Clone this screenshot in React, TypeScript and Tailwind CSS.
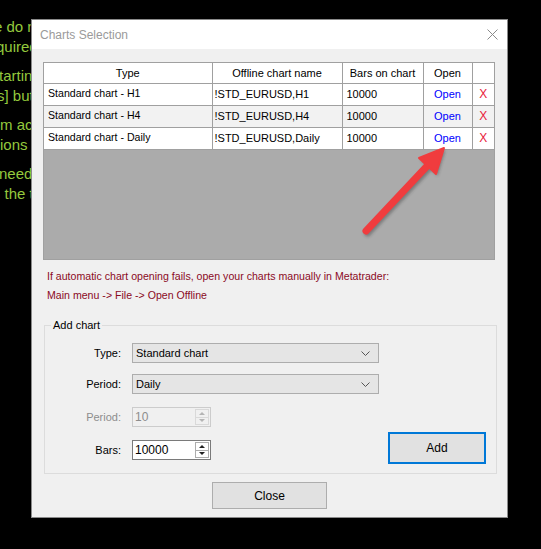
import React from 'react'

const rows = [
  { type: 'Standard chart - H1', name: '!STD_EURUSD,H1', bars: '10000' },
  { type: 'Standard chart - H4', name: '!STD_EURUSD,H4', bars: '10000' },
  { type: 'Standard chart - Daily', name: '!STD_EURUSD,Daily', bars: '10000' },
]

function Chevron() {
  return (
    <svg width="9" height="5" viewBox="0 0 9 5" className="shrink-0">
      <polyline points="0.5,0.5 4.5,4.5 8.5,0.5" fill="none" stroke="#555" strokeWidth="1" />
    </svg>
  )
}

function Select({ value }: { value: string }) {
  return (
    <div className="flex h-[20px] w-[247px] items-center justify-between border border-[#adadad] bg-[#e5e5e5] pl-[3px] pr-[8px]">
      <span>{value}</span>
      <Chevron />
    </div>
  )
}

function Spinner({ value, disabled }: { value: string; disabled?: boolean }) {
  const arrow = disabled ? '#b4b4b4' : '#202020'
  return (
    <div
      className={
        'flex h-[20px] w-[79px] items-center justify-between border pl-[2px] pr-[1px] ' +
        (disabled ? 'border-[#cccccc] bg-[#f0f0f0] text-[#8d8d8d]' : 'border-[#7a7a7a] bg-white text-black')
      }
    >
      <span className="text-[12px]">{value}</span>
      <div className={'flex h-[16px] w-[14px] flex-col border ' + (disabled ? 'border-[#d9d9d9]' : 'border-[#adadad]')}>
        <div className={'flex flex-1 items-center justify-center border-b ' + (disabled ? 'border-[#d9d9d9]' : 'border-[#adadad]')}>
          <svg width="6" height="3" viewBox="0 0 6 3"><polygon points="0,3 3,0 6,3" fill={arrow} /></svg>
        </div>
        <div className="flex flex-1 items-center justify-center">
          <svg width="6" height="3" viewBox="0 0 6 3"><polygon points="0,0 6,0 3,3" fill={arrow} /></svg>
        </div>
      </div>
    </div>
  )
}

function FormRow({ label, disabled, children }: { label: string; disabled?: boolean; children: React.ReactNode }) {
  return (
    <div className="flex items-center">
      <span className={'w-[77px] pr-[1px] text-right ' + (disabled ? 'text-[#8d8d8d]' : 'text-black')}>{label}</span>
      <div className="ml-[10px]">{children}</div>
    </div>
  )
}

export default function App() {
  return (
    <div className="relative h-[549px] w-[541px] overflow-hidden bg-black font-['Liberation_Sans',Arial,sans-serif]">
      {/* terminal text behind the dialog */}
      <div className="pt-[17px] text-[15px] leading-[20px] text-[#94c93d]">
        <div className="ml-[-6px] whitespace-nowrap">e do not</div>
        <div className="ml-[-4px] whitespace-nowrap">quired for</div>
        <div className="ml-[-1px] mt-[9px] whitespace-nowrap">tarting the</div>
        <div className="ml-[-3px] whitespace-nowrap">s] button</div>
        <div className="mt-[9px] whitespace-nowrap">m account</div>
        <div className="whitespace-nowrap">ions for</div>
        <div className="ml-[-1px] mt-[9px] whitespace-nowrap">need to</div>
        <div className="ml-[-8px] whitespace-nowrap">n the terminal</div>
      </div>

      {/* dialog window */}
      <div className="absolute left-[31px] top-[19px] flex h-[499px] w-[477px] flex-col border border-[#8a8a8a] bg-[#f0f0f0] text-[11px] text-black">
        <div className="flex h-[29px] shrink-0 items-center justify-between bg-white pl-[8px] pr-[9px]">
          <span className="text-[12px] text-[#9a9a9a]">Charts Selection</span>
          <svg width="11" height="11" viewBox="0 0 11 11">
            <path d="M0.5 0.5 L10.5 10.5 M10.5 0.5 L0.5 10.5" stroke="#8a8a8a" strokeWidth="1" />
          </svg>
        </div>

        <div className="flex flex-1 flex-col px-[11px] pt-[13px]">
          {/* grid */}
          <div className="relative h-[198px] w-[452px] border border-[#a0a0a0] bg-[#ababab]">
            <table className="w-[450px] table-fixed border-collapse">
              <colgroup>
                <col className="w-[168px]" />
                <col className="w-[130px]" />
                <col className="w-[81px]" />
                <col className="w-[49px]" />
                <col className="w-[22px]" />
              </colgroup>
              <thead>
                <tr className="h-[20px] bg-white">
                  <th className="border-b border-r border-[#a0a0a0] font-normal">Type</th>
                  <th className="border-b border-r border-[#a0a0a0] font-normal">Offline chart name</th>
                  <th className="border-b border-r border-[#a0a0a0] font-normal">Bars on chart</th>
                  <th className="border-b border-r border-[#a0a0a0] font-normal">Open</th>
                  <th className="border-b border-[#a0a0a0] font-normal"></th>
                </tr>
              </thead>
              <tbody>
                {rows.map((r, i) => (
                  <tr key={r.name} className={'h-[22px] ' + (i === 1 ? 'bg-[#f2f2f2]' : 'bg-white')}>
                    <td className="border-b border-r border-[#a0a0a0] pl-[4px] text-[10.6px]">{r.type}</td>
                    <td className="border-b border-r border-[#a0a0a0] pl-[2px]">{r.name}</td>
                    <td className="border-b border-r border-[#a0a0a0] pl-[4px]">{r.bars}</td>
                    <td className="border-b border-r border-[#a0a0a0] text-center text-[#0000ff]">Open</td>
                    <td className="border-b border-[#a0a0a0] text-center text-[12px] text-[#e8203a]">X</td>
                  </tr>
                ))}
              </tbody>
            </table>

            {/* annotation arrow */}
            <svg className="absolute left-0 top-0" width="450" height="196" viewBox="0 0 450 196">
              <defs>
                <filter id="sh" x="-20%" y="-20%" width="140%" height="140%">
                  <feGaussianBlur stdDeviation="1.5" />
                </filter>
              </defs>
              <g opacity="0.35" filter="url(#sh)" transform="translate(1.5,2)">
                <line x1="322" y1="168" x2="385" y2="101" stroke="#222" strokeWidth="7" strokeLinecap="round" />
                <polygon points="400,85 392,111 375,95" fill="#222" />
              </g>
              <line x1="322" y1="168" x2="385" y2="101" stroke="#f03c3e" strokeWidth="7" strokeLinecap="round" />
              <polygon points="400,85 392,111 375,95" fill="#f03c3e" stroke="#f03c3e" strokeWidth="2" strokeLinejoin="round" />
            </svg>
          </div>

          <div className="mt-[7px] pl-[4px] text-[10.6px] leading-[19px] text-[#8b0a1f]">
            <div>If automatic chart opening fails, open your charts manually in Metatrader:</div>
            <div>Main menu -&gt; File -&gt; Open Offline</div>
          </div>

          <fieldset className="ml-[1px] mr-[-1px] mt-[14px] border border-[#dcdcdc] p-0">
            <legend className="ml-[6px] px-[2px] leading-[13px]">Add chart</legend>
            <div className="flex items-end justify-between pt-[11px]">
              <div className="flex flex-col pb-[13px]">
                <FormRow label="Type:"><Select value="Standard chart" /></FormRow>
                <div className="mt-[11px]"><FormRow label="Period:"><Select value="Daily" /></FormRow></div>
                <div className="mt-[13px]"><FormRow label="Period:" disabled><Spinner value="10" disabled /></FormRow></div>
                <div className="mt-[13px]"><FormRow label="Bars:"><Spinner value="10000" /></FormRow></div>
              </div>
              <button className="mb-[9px] mr-[10px] h-[32px] w-[98px] border-2 border-[#0078d7] bg-[#e1e1e1] text-[12px]">Add</button>
            </div>
          </fieldset>

          <div className="mt-[8px] flex justify-center">
            <button className="h-[27px] w-[115px] border border-[#adadad] bg-[#e1e1e1] text-[12px]">Close</button>
          </div>
        </div>
      </div>
    </div>
  )
}
